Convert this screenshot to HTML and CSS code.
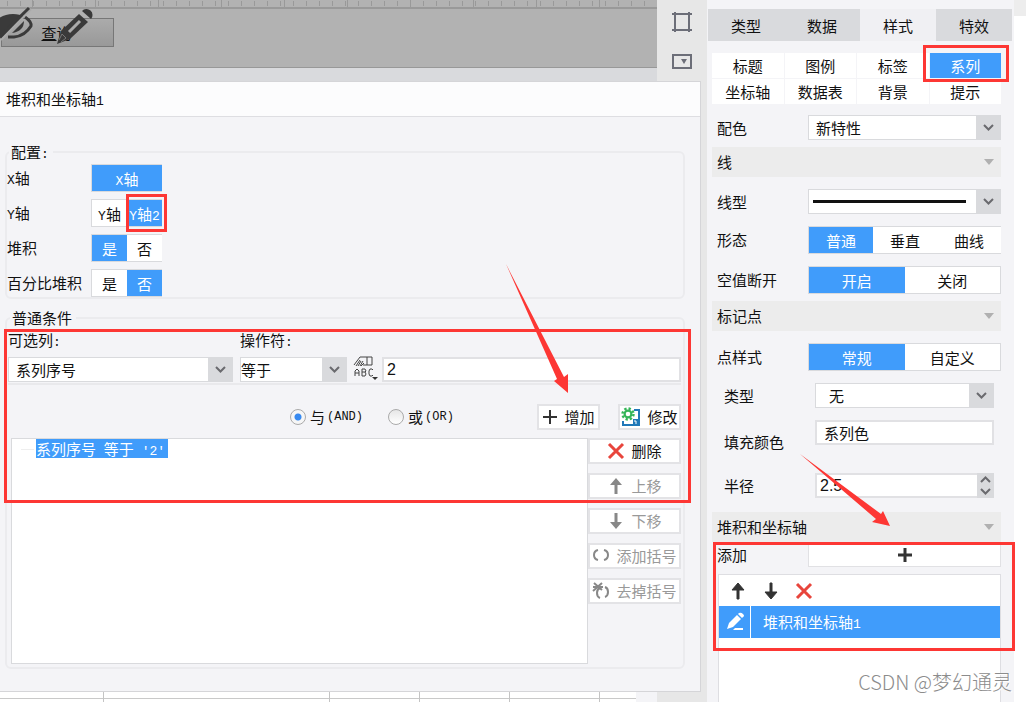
FILE: index.html
```html
<!DOCTYPE html>
<html lang="zh-CN">
<head>
<meta charset="utf-8">
<title>堆积和坐标轴</title>
<link rel="stylesheet" href="styles.css">
</head>
<body>
<div class="app">
  <main class="workbench">
    <div class="top">
      <div class="canvas">
        <div class="ruler"></div>
        <div class="design">
          <button class="query" type="button"><u>查</u>询</button>
          <svg class="float-icons" width="96" height="40" viewBox="0 0 96 40" aria-hidden="true">
            <path d="M-2 13Q4 8 13 8Q20 8 24 11L1 33Q-2 28-2 20Z" fill="#3a3a3a"/>
            <path d="M25 11Q32 16 31 20Q25 30 14 31H8" stroke="#3a3a3a" stroke-width="3" fill="none"/>
            <path d="M24 15Q24 25 12 27Z" fill="#3a3a3a"/>
            <path d="M31 3L1 34" stroke="#aaa" stroke-width="2"/>
            <path d="M29 2L-2 32" stroke="#3a3a3a" stroke-width="3" fill="none"/>
            <path d="M57 38L61 25L79 8L88 16L70 33Z" fill="#3a3a3a"/>
            <path d="M82 5A6 6 0 1 1 91 13Z" fill="#3a3a3a"/>
            <path d="M69 26L80 15" stroke="#aaa" stroke-width="3"/>
            <path d="M59 34L62 28L66 32L61 36" fill="none" stroke="#777" stroke-width="1"/>
          </svg>
        </div>
        <div class="canvas-foot"></div>
      </div>
      <div class="tools">
        <svg width="22" height="22" viewBox="0 0 22 22" fill="none" stroke="#6c6e78" stroke-width="2"><path d="M4 1V21M18 1V21M1 3H21M1 19H21"/></svg>
        <svg width="22" height="16" viewBox="0 0 22 16"><rect x="2" y="2" width="18" height="13" fill="none" stroke="#6c6e78" stroke-width="2"/><path d="M10 6H16L13 11Z" fill="#6c6e78"/></svg>
      </div>
    </div>

    <section class="dialog">
      <h1 class="dialog-title">堆积和坐标轴<span class="latin">1</span></h1>
      <div class="dialog-body">
        <fieldset class="group config">
          <legend>配置<span class="latin">:</span></legend>
          <div class="config-row"><span class="config-label"><span class="latin">X</span>轴</span>
            <div class="segment"><button type="button" class="on"><span class="latin">X</span>轴</button></div></div>
          <div class="config-row"><span class="config-label"><span class="latin">Y</span>轴</span>
            <div class="segment"><button type="button"><span class="latin">Y</span>轴</button><button type="button" class="on"><span class="latin">Y</span>轴<span class="latin">2</span></button></div></div>
          <div class="config-row"><span class="config-label">堆积</span>
            <div class="segment"><button type="button" class="on">是</button><button type="button">否</button></div></div>
          <div class="config-row"><span class="config-label">百分比堆积</span>
            <div class="segment"><button type="button">是</button><button type="button" class="on">否</button></div></div>
        </fieldset>

        <fieldset class="group conditions">
          <legend>普通条件</legend>
          <div class="filter">
            <div class="filter-col">
              <label for="column">可选列<span class="latin">:</span></label>
              <div class="select"><select id="column"><option>系列序号</option></select><span class="caret"><svg width="11" height="7" viewBox="0 0 11 7"><path d="M1 1L5.500 5.500L10 1"/></svg></span></div>
            </div>
            <div class="filter-col operator">
              <label for="operator">操作符<span class="latin">:</span></label>
              <div class="select tight"><select id="operator"><option>等于</option></select><span class="caret"><svg width="11" height="7" viewBox="0 0 11 7"><path d="M1 1L5.500 5.500L10 1"/></svg></span></div>
            </div>
            <button class="type-button" type="button" aria-label="值类型">
              <svg width="26" height="26" viewBox="0 0 26 26" fill="none" stroke="#444">
                <path d="M7 1H19V9H10M14 1V9M7 1L1 9M7 4L3 10M8 5L5 10M10 5L7 10M11 7L8 10"/>
                <path d="M2 20V15L4 13L6 15V20M2 17H6M9 20V13H12L13 15L12 16H9M12 16L13 18L12 20H9M20 14L19 13H17L16 15V18L17 20H19L20 19"/>
                <path d="M19 21H25L22 24Z" fill="#333" stroke="none"/>
              </svg>
            </button>
            <input class="field value" type="text" value="2" aria-label="值">
          </div>
          <div class="join">
            <label class="radio"><input type="radio" name="join" checked>与<span class="latin">(AND)</span></label>
            <label class="radio"><input type="radio" name="join">或<span class="latin">(OR)</span></label>
            <div class="join-actions">
              <button class="action" type="button"><svg width="16" height="16" viewBox="0 0 16 16" stroke="#333" stroke-width="2"><path d="M8 1V15M1 8H15"/></svg>增加</button>
              <button class="action" type="button"><svg width="20" height="20" viewBox="0 0 20 20" fill="none"><path d="M13 3H18V18H2V14" stroke="#1f78b8" stroke-width="2"/><rect x="12" y="12" width="6" height="6" fill="#1f78b8"/><path d="M13 14H15V17" stroke="#fff"/><circle cx="7" cy="7" r="5.500" fill="#fff"/><circle cx="7" cy="7" r="5.500" stroke="#35b558" stroke-width="2.400" stroke-dasharray="2.300 2"/><circle cx="7" cy="7" r="3.400" stroke="#35b558" stroke-width="2.200"/></svg>修改</button>
            </div>
          </div>
          <div class="tree-area">
            <div class="tree"><span class="branch"></span><span class="node">系列序号<span class="latin"> </span>等于<span class="latin"> ′2′</span></span></div>
            <div class="side-actions">
              <button class="action" type="button"><svg width="18" height="18" viewBox="0 0 18 18" stroke="#e8453c" stroke-width="3"><path d="M2 2L16 16M16 2L2 16"/></svg>删除</button>
              <button class="action" type="button" disabled><svg width="18" height="18" viewBox="0 0 18 18"><path d="M9 1L15 8H10.500V17H7.500V8H3Z" fill="#888"/></svg>上移</button>
              <button class="action" type="button" disabled><svg width="18" height="18" viewBox="0 0 18 18"><path d="M9 17L15 10H10.500V1H7.500V10H3Z" fill="#888"/></svg>下移</button>
              <button class="action" type="button" disabled><svg width="18" height="18" viewBox="0 0 18 18" fill="none" stroke="#888" stroke-width="2"><path d="M6 3Q2 4 2 8T6 13M12 3Q16 4 16 8T12 13"/></svg>添加括号</button>
              <button class="action" type="button" disabled><svg width="18" height="18" viewBox="0 0 18 18" fill="none" stroke="#888" stroke-width="2"><path d="M8 6Q5 7 5 11T8 16M13 5Q16 6 16 10T13 15"/><path d="M2 1L10 8M10 1L1 9M1 5H11"/></svg>去掉括号</button>
            </div>
          </div>
        </fieldset>
      </div>
    </section>

    <div class="sheet">
      <div class="cells"><i></i><i></i><i></i><i></i><i></i></div>
    </div>
  </main>

  <aside class="panel">
    <nav class="tabs">
      <button type="button">类型</button><button type="button">数据</button><button type="button" class="on">样式</button><button type="button">特效</button>
    </nav>
    <nav class="subtabs">
      <button type="button">标题</button><button type="button">图例</button><button type="button">标签</button><button type="button" class="on">系列</button>
      <button type="button">坐标轴</button><button type="button">数据表</button><button type="button">背景</button><button type="button">提示</button>
    </nav>
    <div class="row"><label for="palette">配色</label>
      <div class="select"><select id="palette"><option>新特性</option></select><span class="caret"><svg width="11" height="7" viewBox="0 0 11 7"><path d="M1 1L5.500 5.500L10 1"/></svg></span></div></div>
    <h2 class="section">线<span class="fold"></span></h2>
    <div class="row roomy"><label for="line">线型</label>
      <div class="select line-select"><select id="line"><option aria-label="实线"></option></select><span class="stroke"></span><span class="caret"><svg width="11" height="7" viewBox="0 0 11 7"><path d="M1 1L5.500 5.500L10 1"/></svg></span></div></div>
    <div class="row roomy"><span>形态</span>
      <div class="segment"><button type="button" class="on">普通</button><button type="button">垂直</button><button type="button">曲线</button></div></div>
    <div class="row roomy"><span>空值断开</span>
      <div class="segment framed"><button type="button" class="on">开启</button><button type="button">关闭</button></div></div>
    <h2 class="section">标记点<span class="fold"></span></h2>
    <div class="row roomy"><span>点样式</span>
      <div class="segment framed"><button type="button" class="on">常规</button><button type="button">自定义</button></div></div>
    <div class="sub">
      <div class="row"><label for="marker">类型</label>
        <div class="select wide"><select id="marker"><option>无</option></select><span class="caret"><svg width="11" height="7" viewBox="0 0 11 7"><path d="M1 1L5.500 5.500L10 1"/></svg></span></div></div>
      <div class="row fill"><label for="fill">填充颜色</label><input class="field" id="fill" type="text" value="系列色"></div>
      <div class="row radius"><label for="radius">半径</label>
        <div class="spinner"><input class="field" id="radius" type="text" value="2.5">
          <span class="steps"><button type="button" aria-label="增大"><svg width="11" height="7" viewBox="0 0 11 7"><path d="M1 6L5.500 1.500L10 6"/></svg></button><button type="button" aria-label="减小"><svg width="11" height="7" viewBox="0 0 11 7"><path d="M1 1L5.500 5.500L10 1"/></svg></button></span></div></div>
    </div>
    <h2 class="section last">堆积和坐标轴<span class="fold"></span></h2>
    <div class="row add"><span>添加</span><button class="add-button" type="button" aria-label="添加"><svg width="16" height="16" viewBox="0 0 16 16" stroke="#333" stroke-width="3"><path d="M8 1V15M1 8H15"/></svg></button></div>
    <div class="list">
      <div class="list-tools">
        <button type="button" aria-label="上移"><svg width="18" height="18" viewBox="0 0 18 18"><path d="M9 1L15 8H10V17H8V8H3Z" fill="#333" stroke="#333"/></svg></button>
        <button type="button" aria-label="下移"><svg width="18" height="18" viewBox="0 0 18 18"><path d="M9 17L15 10H10V1H8V10H3Z" fill="#333" stroke="#333"/></svg></button>
        <button type="button" aria-label="删除"><svg width="18" height="18" viewBox="0 0 18 18" stroke="#e8453c" stroke-width="3"><path d="M2 2L16 16M16 2L2 16"/></svg></button>
      </div>
      <div class="item"><span class="item-icon"><svg width="20" height="20" viewBox="0 0 20 20" fill="#fff"><path d="M2 17L4 11L12 3L16 7L8 15Z"/><path d="M13 2L14 1Q16 0 18 2T18 5L17 6Z"/><path d="M10 16H18V18H8Z"/></svg></span><span class="item-name">堆积和坐标轴<span class="latin">1</span></span></div>
    </div>
  </aside>
  <div class="gutter"></div>

  <svg class="marks" width="1026" height="702" viewBox="0 0 1026 702" aria-hidden="true">
    <g fill="none" stroke="#fd3734" stroke-width="3">
      <rect x="127.500" y="195.500" width="38" height="35"/>
      <rect x="5.500" y="330.500" width="684" height="171"/>
      <rect x="924.500" y="46.500" width="83" height="34"/>
      <rect x="714.500" y="543.500" width="299" height="106"/>
    </g>
    <g fill="#fd3734">
      <path d="M506 264L564 377L568 374V393L554 381L557 379Z"/>
      <path d="M800 454L881 514L883 511L890 526L872 522L876 519Z"/>
    </g>
  </svg>
  <div class="watermark">CSDN @梦幻通灵</div>
</div>
</body>
</html>
```
FILE: styles.css
```css
* { box-sizing: border-box; }
body {
  margin: 0;
  background: #fff;
  color: #111;
  font: 15px/20px "Noto Sans CJK SC", sans-serif;
}
button, input, select { font: inherit; color: inherit; margin: 0; border-radius: 0; }
button { padding: 0; border: 0; background: #fff; line-height: 20px; }
svg { display: block; flex: none; }
.latin { font-family: "Liberation Mono", "Noto Sans CJK SC", monospace; font-size: 13px; line-height: 1; white-space: pre; }

.app { position: relative; display: flex; min-height: 100vh; overflow: hidden; }
.workbench { flex: 1; min-width: 0; display: flex; flex-direction: column; background: #e7e7e7; }

/* Canvas behind the dialog */
.top { display: flex; height: 81px; }
.canvas { flex: 1; display: flex; flex-direction: column; background: #b2b2b2; }
.ruler {
  height: 9px;
  border-bottom: 2px solid #999;
  background:
    repeating-linear-gradient(90deg, transparent 0 32px, #999 32px 33px, transparent 33px 63px),
    repeating-linear-gradient(90deg, transparent 0 7px, #999 7px 8px, transparent 8px 13px) 0 1px / 100% 5px no-repeat;
}
.design { position: relative; flex: 1; padding-top: 9px; border-bottom: 1px solid #989898; }
.query {
  display: block;
  width: 113px;
  height: 29px;
  margin-left: 1px;
  padding-right: 2px;
  border: 1px solid #777;
  background: linear-gradient(#ababab, #999);
}
.float-icons { position: absolute; left: 0; top: -3px; }
.canvas-foot { height: 13px; background: #d9dadd; }
.tools { width: 50px; display: flex; flex-direction: column; align-items: center; gap: 20px; padding-top: 11px; }

/* Dialog */
.dialog { margin-right: 6px; border: 1px solid #d5d5d8; border-left: 0; background: #f4f4f7; }
.dialog-title {
  margin: 0;
  padding: 7px 6px;
  font-size: 15px;
  font-weight: 400;
  border-bottom: 1px solid #dedee2;
  background: #fcfcfd;
}
.dialog-body { padding: 25px 15px 22px 5px; }
.group { margin: 0; min-width: 0; border: 2px solid #ebebee; border-radius: 6px; }
.group legend { padding: 0 4px 0 2px; margin-left: 2px; }
.config { padding: 0; }
.config-row { display: flex; align-items: center; height: 35px; }
.config-row:first-of-type { margin-top: -2px; }
.config-row:last-child { margin-bottom: -3px; }
.config-label { width: 84px; }
.segment { display: flex; height: 28px; border: 1px solid #d9dadd; border-right: 0; }
.segment button { flex: 1; min-width: 0; white-space: nowrap; padding-top: 2px; }
.config .segment { width: 71px; }
.on { background: #409cfb; color: #fff; }

.conditions { margin-top: 9px; padding: 0 2px 3px 1px; }
.filter { display: flex; align-items: flex-end; margin-top: 2px; padding-bottom: 1px; border-bottom: 2px solid #e9e9ec; }
.filter-col { flex: 0 0 225px; }
.filter-col label { display: block; height: 27px; }
.operator { flex-basis: 107px; margin-left: 7px; }
.select { position: relative; height: 25px; border: 1px solid #d9dadd; background: #fff; }
.select select { display: block; width: 100%; height: 23px; padding: 0 30px 0 7px; border: 0; background: transparent; appearance: none; }
.select.tight select { padding-left: 0; }
.select.wide select { padding-left: 13px; }
.caret {
  position: absolute; right: 0; top: 0; bottom: 0; width: 24px;
  display: flex; align-items: center; justify-content: center;
  background: #d9dadd; pointer-events: none;
}
.caret path, .steps path { fill: none; stroke: #6a6a6e; stroke-width: 2; }
.type-button { width: 26px; margin: 0 3px 0 6px; background: transparent; }
.field { height: 25px; padding: 0 7px; border: 2px solid #e1e1e4; background: #fff; }
.value { flex: 1; min-width: 0; padding: 0 3px; font: 16px/20px "Liberation Sans", sans-serif; }
.join { display: flex; align-items: center; height: 50px; padding: 14px 0 0 282px; }
.radio { display: flex; align-items: center; }
.radio + .radio { margin-left: 25px; }
.radio .latin { font-size: 12px; margin-left: 2px; }
.radio input {
  appearance: none;
  width: 16px; height: 16px; margin-right: 4px;
  border: 1px solid #aaa; border-radius: 50%;
  background: linear-gradient(#e6e6e6, #fff);
}
.radio input:checked { background: radial-gradient(circle, #388af0 0 3px, #f6f6f6 4px); }
.join-actions { display: flex; gap: 18px; margin-left: auto; }
.action {
  display: flex; align-items: center; justify-content: center; gap: 6px;
  height: 26px; border: 2px solid #e3e3e6; white-space: nowrap;
}
.join-actions .action { width: 63px; }
.action:disabled { color: #999; }
.tree-area { display: flex; padding-left: 3px; margin-top: 3px; }
.tree { flex: 1; min-height: 226px; display: flex; align-items: flex-start; border: 1px solid #d9dadd; background: #fff; }
.branch { width: 13px; margin: 10px 2px 0 9px; border-top: 1px solid #eee; }
.node { padding-right: 3px; height: 19px; line-height: 19px; background: #409cfb; color: #fff; }
.side-actions { width: 93px; display: flex; flex-direction: column; gap: 9px; }

/* Sheet edge under the dialog */
.sheet { flex: 1; display: flex; padding-right: 50px; }
.cells {
  flex: 1; display: flex;
  border-right: 21px solid #f4f4f7;
  background: linear-gradient(#c9c9c9, #c9c9c9) 0 6px / 100% 1px no-repeat #fff;
}
.cells i { width: 90px; border-right: 1px solid #c4c4c4; }
.cells i:first-child { width: 104px; }
.cells i:nth-child(2) { width: 226px; }

/* Property panel */
.panel { width: 307px; display: flex; flex-direction: column; padding: 9px 0 0; background: #f4f4f7; }
.tabs { display: grid; grid-template-columns: repeat(4, 1fr); height: 32px; margin: 0 2px 0 1px; }
.tabs button { background: #d9dadd; padding-top: 1px; }
.tabs .on { background: #f0f0f3; color: inherit; }
.subtabs { display: grid; grid-template-columns: repeat(4, 1fr); gap: 1px; margin: 12px 13px 11px 5px; }
.subtabs button { height: 25px; padding-top: 1px; }
.row { display: grid; grid-template-columns: 91px minmax(0, 1fr); align-items: center; margin: 0 13px 0 10px; }
.section {
  display: flex; align-items: center; justify-content: space-between;
  height: 30px; margin: 7px 13px 0 5px; padding: 0 7px 0 5px;
  font-size: 15px; font-weight: 400; background: #ececec;
}
.fold { border: 5px solid transparent; border-top: 6px solid #b0b0b0; border-bottom: 0; }
.roomy { margin-top: 12px; }
.stroke { position: absolute; left: 4px; right: 34px; top: 10px; height: 3px; background: #111; pointer-events: none; }
.framed { border-right: 1px solid #d9dadd; }
.sub { padding: 12px 7px 14px; }
.fill { margin-top: 12px; }
.fill label { padding-top: 12px; }
.fill .field { min-width: 0; align-self: start; }
.radius { margin-top: 21px; }
.spinner { display: flex; }
.spinner .field { flex: 1; min-width: 0; padding: 0 3px; border-right: 0; font: 16px/20px "Liberation Sans", sans-serif; }
.steps { width: 17px; display: grid; background: #d9dadd; }
.steps button { display: grid; place-items: center; background: transparent; }
.section.last { margin-top: 0; }
.add-button { height: 25px; display: grid; place-items: center; border: 1px solid #e1e1e4; }
.list { flex: 1; margin: 7px 13px 0 11px; border: 1px solid #dedee2; border-bottom: 0; background: #fff; }
.list-tools { display: flex; gap: 15px; height: 31px; padding-left: 10px; }
.item { display: flex; height: 32px; align-items: center; background: #409cfb; color: #fff; }
.item-icon { display: grid; place-items: center; align-self: stretch; width: 32px; border-right: 1px solid #fff; }
.item-name { padding-left: 12px; }
.gutter { width: 12px; border-top: 16px solid #ededed; background: #fff; }

/* Annotations over the window */
.marks { position: absolute; left: 0; top: 0; pointer-events: none; }
.watermark {
  position: absolute; right: 14px; bottom: 6px;
  font-size: 20px; line-height: 28px; font-weight: 300;
  color: #8c8c8c; text-shadow: 1px 1px 0 #fff; white-space: nowrap;
}
```
